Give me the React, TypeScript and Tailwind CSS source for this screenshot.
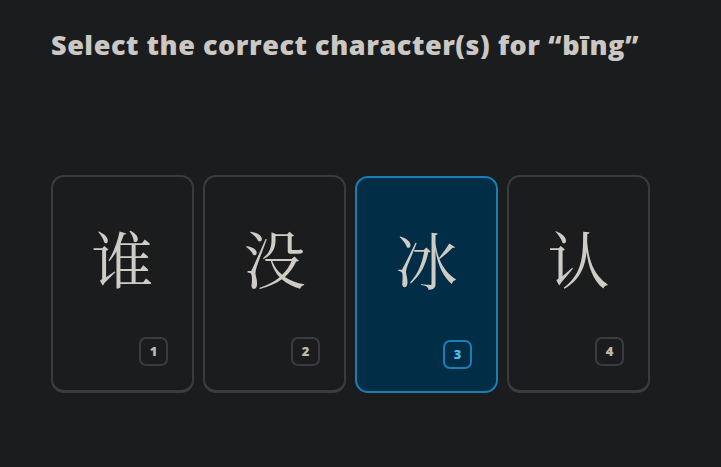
import React from "react";

const items = [
  { ch: "谁", n: 1 },
  { ch: "没", n: 2 },
  { ch: "冰", n: 3, selected: true },
  { ch: "认", n: 4 },
];

export default function App() {
  return (
    <div className="w-[721px] h-[467px] bg-[#1b1c1e] overflow-hidden">
      <div className="pl-[51px] pt-[27px]">
        <h1
          className="text-[27px] font-extrabold leading-[36px] text-[#cbc8c3] tracking-[0.55px] whitespace-nowrap"
          style={{ fontFamily: "'Open Sans', 'Liberation Sans', sans-serif" }}
        >
          Select the correct character(s) for “bīng”
        </h1>
        <div className="flex gap-[9px] mt-[112px]">
          {items.map((it) => (
            <div
              key={it.n}
              className={
                it.selected
                  ? "relative w-[143px] h-[217px] mt-[1px] rounded-[13px] border-2 border-[#1a7db3] bg-[#012d47] flex items-start justify-center"
                  : "relative w-[143px] h-[218px] rounded-[13px] border-2 border-b-[3px] border-[#3a3c3f] bg-[#1b1c1e] flex items-start justify-center"
              }
            >
              <span
                className="mt-[39px] text-[62px] leading-[84px] text-[#cfcbc5]"
                style={{ fontFamily: "'Noto Serif CJK SC', 'Noto Sans CJK SC', serif" }}
              >
                {it.ch}
              </span>
              <div
                className={
                  it.selected
                    ? "absolute left-[86px] top-[162px] w-[29px] h-[29px] rounded-[7px] border-2 border-[#1a7db3] flex items-center justify-center text-[13px] font-extrabold text-[#4fb8ee]"
                    : "absolute left-[86px] top-[160px] w-[29px] h-[29px] rounded-[7px] border-2 border-[#3a3c3f] flex items-center justify-center text-[13px] font-extrabold text-[#bdbab5]"
                }
                style={{ fontFamily: "'Open Sans', 'Liberation Sans', sans-serif" }}
              >
                {it.n}
              </div>
            </div>
          ))}
        </div>
      </div>
    </div>
  );
}
